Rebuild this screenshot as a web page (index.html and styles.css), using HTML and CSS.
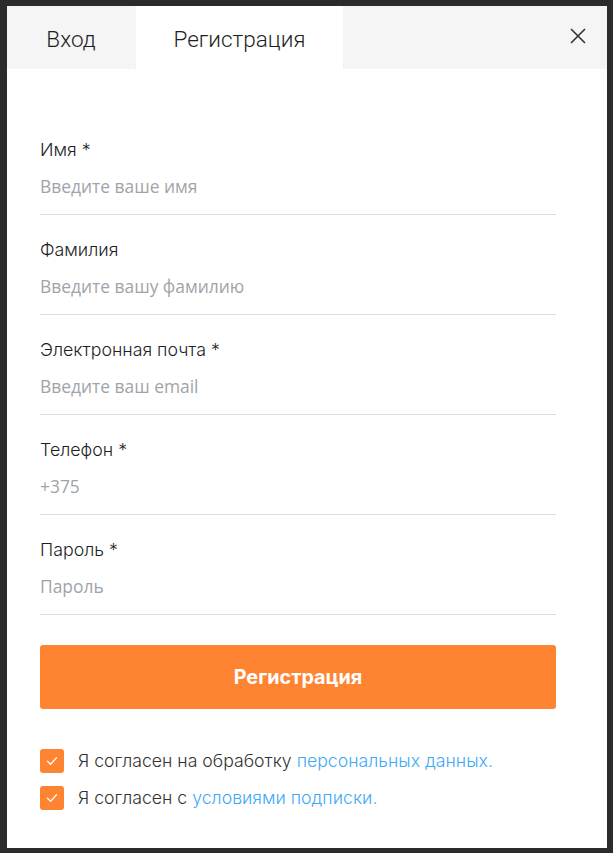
FILE: index.html
```html
<!DOCTYPE html>
<html lang="ru">
<head>
<meta charset="utf-8">
<title>Регистрация</title>
<link rel="stylesheet" href="styles.css">
</head>
<body>
<div class="backdrop">
  <div class="modal">
    <div class="tabs">
      <div class="tab">Вход</div>
      <div class="tab tab-active">Регистрация</div>
      <div class="tabs-fill">
        <button class="close" aria-label="Закрыть">
          <svg width="18" height="18" viewBox="0 0 18 18"><path d="M2 2L16 16M16 2L2 16" stroke="#333" stroke-width="1.6" fill="none"/></svg>
        </button>
      </div>
    </div>
    <form class="form">
      <div class="field">
        <label class="label">Имя *</label>
        <input class="input" type="text" placeholder="Введите ваше имя">
      </div>
      <div class="field">
        <label class="label">Фамилия</label>
        <input class="input" type="text" placeholder="Введите вашу фамилию">
      </div>
      <div class="field">
        <label class="label">Электронная почта *</label>
        <input class="input" type="text" placeholder="Введите ваш email">
      </div>
      <div class="field">
        <label class="label">Телефон *</label>
        <input class="input" type="text" placeholder="+375">
      </div>
      <div class="field">
        <label class="label">Пароль *</label>
        <input class="input" type="password" placeholder="Пароль">
      </div>
      <button type="button" class="submit">Регистрация</button>
      <div class="agree">
        <div class="check-row">
          <span class="box"><svg width="12" height="10" viewBox="0 0 12 10"><path d="M1.5 5.2L4.6 8.2L10.5 1.8" stroke="#fff" stroke-width="1.3" fill="none" stroke-linecap="round" stroke-linejoin="round"/></svg></span>
          <span class="check-text">Я согласен на обработку <a class="link" href="#">персональных данных.</a></span>
        </div>
        <div class="check-row">
          <span class="box"><svg width="12" height="10" viewBox="0 0 12 10"><path d="M1.5 5.2L4.6 8.2L10.5 1.8" stroke="#fff" stroke-width="1.3" fill="none" stroke-linecap="round" stroke-linejoin="round"/></svg></span>
          <span class="check-text">Я согласен с <a class="link" href="#">условиями подписки.</a></span>
        </div>
      </div>
    </form>
  </div>
</div>
</body>
</html>
```
FILE: styles.css
```css
html, body {
  margin: 0;
  padding: 0;
}
body {
  background: #2b2b2b;
  font-family: Inter, "Noto Sans", sans-serif;
  height: 853px;
  overflow: hidden;
}
.backdrop {
  padding: 6px 6px 0 7px;
}
.modal {
  width: 600px;
  height: 842px;
  background: #fff;
  box-sizing: border-box;
}
.tabs {
  display: flex;
  height: 63px;
  background: #f5f5f5;
}
.tab {
  font-family: Roboto, sans-serif;
  font-weight: 300;
  font-size: 22.5px;
  color: #1e1e1e;
  display: flex;
  align-items: center;
  justify-content: center;
  padding-top: 3px;
  box-sizing: border-box;
  width: 128px;
}
.tab-active {
  width: 209px;
  background: #fff;
  border-left: 1px dotted #e8e8e8;
  border-right: 1px dotted #e8e8e8;
}
.tabs-fill {
  flex: 1;
  display: flex;
  justify-content: flex-end;
  align-items: flex-start;
}
.close {
  background: none;
  border: 0;
  padding: 0;
  margin: 21px 20px 0 0;
  width: 18px;
  height: 18px;
  display: block;
  cursor: pointer;
}
.close svg { display: block; }
.form {
  padding: 71px 51px 0 33px;
  display: flex;
  flex-direction: column;
}
.field {
  display: flex;
  flex-direction: column;
  border-bottom: 1px solid #dcdcdc;
  padding-bottom: 8px;
  margin-bottom: 25px;
}
.field:nth-last-of-type(1) { margin-bottom: 0; }
.label {
  font-size: 17.8px;
  font-weight: 350;
  line-height: 20px;
  color: #1e1e1e;
  margin-bottom: 6px;
}
.input {
  border: 0;
  outline: none;
  height: 40px;
  padding: 0;
  font-family: "Open Sans", sans-serif;
  font-size: 17.4px;
  color: #222;
  background: transparent;
}
.input::placeholder {
  color: #a0a4a8;
  opacity: 1;
}
.submit {
  margin-top: 5px;
  height: 64px;
  border: 0;
  border-radius: 3px;
  background: #ff8431;
  color: #fff;
  font-family: Inter, sans-serif;
  font-weight: 700;
  font-size: 19.8px;
  cursor: pointer;
}
.agree {
  margin-top: 40px;
  display: flex;
  flex-direction: column;
  gap: 13px;
}
.check-row {
  display: flex;
  align-items: center;
  gap: 14px;
}
.box {
  width: 24px;
  height: 24px;
  border-radius: 3px;
  background: #ff8431;
  display: flex;
  align-items: center;
  justify-content: center;
  flex: none;
}
.check-text {
  font-size: 17.7px;
  font-weight: 350;
  color: #333;
  line-height: 20px;
}
.link {
  color: #3fa9f5;
  text-decoration: none;
}
```
